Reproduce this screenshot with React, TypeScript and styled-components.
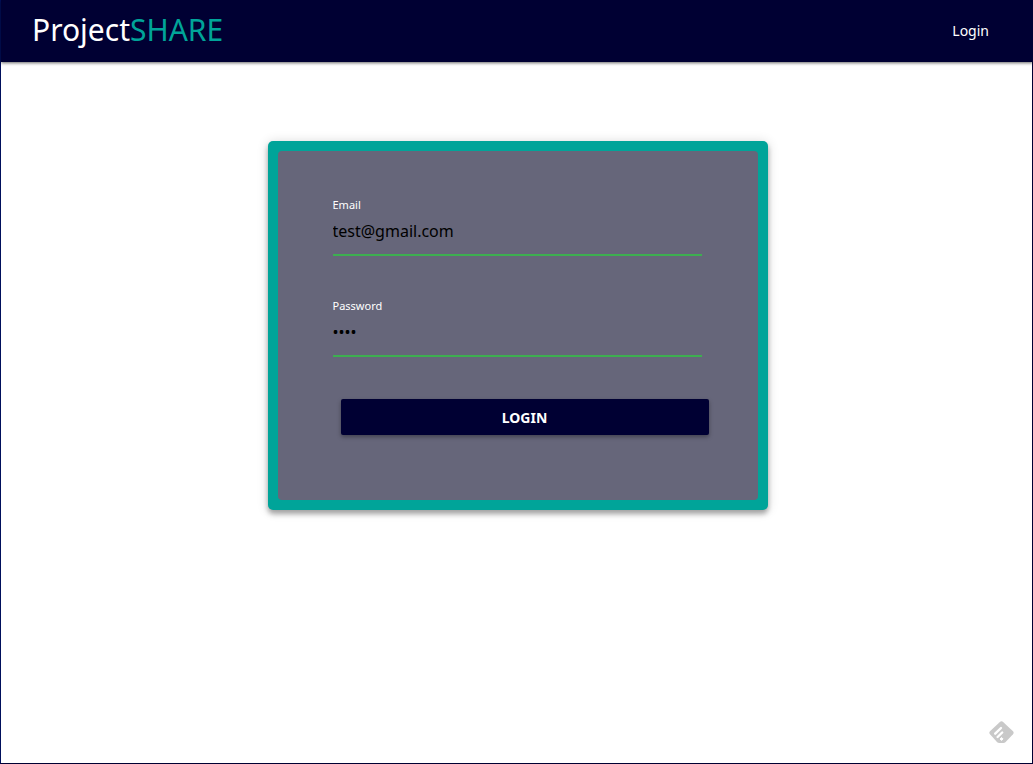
import React, { useState } from "react";
import styled, { createGlobalStyle } from "styled-components";

const navy = "#000033";
const teal = "#00a499";

const GlobalStyle = createGlobalStyle`
  *, *::before, *::after { box-sizing: border-box; }
  body {
    margin: 0;
    background: #fff;
    font-family: "Noto Sans", "Open Sans", sans-serif;
  }
`;

const Page = styled.div`
  display: flex;
  flex-direction: column;
  min-height: 100vh;
  border-left: 1px solid #000f5c;
  border-bottom: 1px solid ${navy};
`;

const Header = styled.header`
  display: flex;
  align-items: center;
  justify-content: space-between;
  height: 62px;
  padding: 0 44px 3px 31px;
  background: ${navy};
  box-shadow: 0 1px 3px rgba(0, 0, 0, 0.6);
  z-index: 1;
`;

const Brand = styled.a`
  color: #fff;
  font-size: 30px;
  line-height: 40px;
  text-decoration: none;
`;

const BrandAccent = styled.span`
  color: ${teal};
`;

const NavLink = styled.a`
  color: #fff;
  font-size: 14px;
  line-height: 20px;
  text-decoration: none;
`;

const Main = styled.main`
  flex: 1;
  display: flex;
  justify-content: center;
  align-items: flex-start;
  padding: 79px 0 40px 2px;
  border-right: 1px solid ${navy};
`;

const Card = styled.section`
  width: 100%;
  max-width: 500px;
  padding: 10px;
  border-radius: 5px;
  background: ${teal};
  box-shadow: 0 4px 5px rgba(0, 0, 0, 0.3), 0 1px 12px rgba(0, 0, 0, 0.16);
`;

const Form = styled.form`
  display: flex;
  flex-direction: column;
  padding: 46px 56px 65px 55px;
  border-radius: 4px;
  background: #66667a;
`;

const Field = styled.div`
  display: flex;
  flex-direction: column;
  margin-bottom: 42px;
`;

const Label = styled.label`
  color: #fff;
  font-size: 11px;
  line-height: 16px;
`;

const Input = styled.input`
  width: 100%;
  height: 43px;
  padding: 0 0 5px;
  border: 0;
  border-bottom: 2px solid #3daf50;
  border-radius: 0;
  outline: 0;
  background: transparent;
  color: #000;
  font-family: inherit;
  font-size: 16px;
`;

const SubmitButton = styled.button`
  height: 36px;
  margin: 0 -7px 0 8px;
  border: 0;
  border-radius: 2px;
  background: ${navy};
  box-shadow: 0 2px 4px rgba(0, 0, 0, 0.35);
  color: #fff;
  font-family: inherit;
  font-size: 14px;
  font-weight: 700;
  cursor: pointer;
`;

const FeedButton = styled.button`
  position: fixed;
  right: 19px;
  bottom: 20px;
  display: flex;
  padding: 0;
  border: 0;
  background: transparent;
  cursor: pointer;
`;

function FeedIcon() {
  return (
    <svg width="25" height="23" viewBox="0 0 25 23" aria-hidden="true">
      <path
        d="M10.6 1.2Q12.5-.5 14.4 1.2L24 10.3Q25.3 11.8 24 13.3L16.4 21.2Q15.6 22 14.4 22H10.2Q9 22 8.2 21.2L1 13.3Q-.3 11.8 1 10.3Z"
        fill="#c9c9c9"
      />
      <g stroke="#fff" strokeWidth="2.4" strokeLinecap="round">
        <path d="M6.2 12.7L12 7" />
        <path d="M8.6 16L13.2 11.5" />
      </g>
      <path d="M11 18l1.6-1.5 1.5 1.5-1.5 1.4Z" fill="#fff" stroke="#fff" strokeWidth="1" />
    </svg>
  );
}

export default function App() {
  const [email, setEmail] = useState("test@gmail.com");
  const [password, setPassword] = useState("test");

  return (
    <>
      <GlobalStyle />
      <Page>
        <Header>
          <Brand href="#home">
            Project<BrandAccent>SHARE</BrandAccent>
          </Brand>
          <nav>
            <NavLink href="#login">Login</NavLink>
          </nav>
        </Header>
        <Main>
          <Card>
            <Form onSubmit={(event) => event.preventDefault()}>
              <Field>
                <Label htmlFor="email">Email</Label>
                <Input
                  id="email"
                  type="email"
                  value={email}
                  onChange={(event) => setEmail(event.target.value)}
                />
              </Field>
              <Field>
                <Label htmlFor="password">Password</Label>
                <Input
                  id="password"
                  type="password"
                  value={password}
                  onChange={(event) => setPassword(event.target.value)}
                />
              </Field>
              <SubmitButton type="submit">LOGIN</SubmitButton>
            </Form>
          </Card>
        </Main>
        <FeedButton type="button" aria-label="Follow feed">
          <FeedIcon />
        </FeedButton>
      </Page>
    </>
  );
}
